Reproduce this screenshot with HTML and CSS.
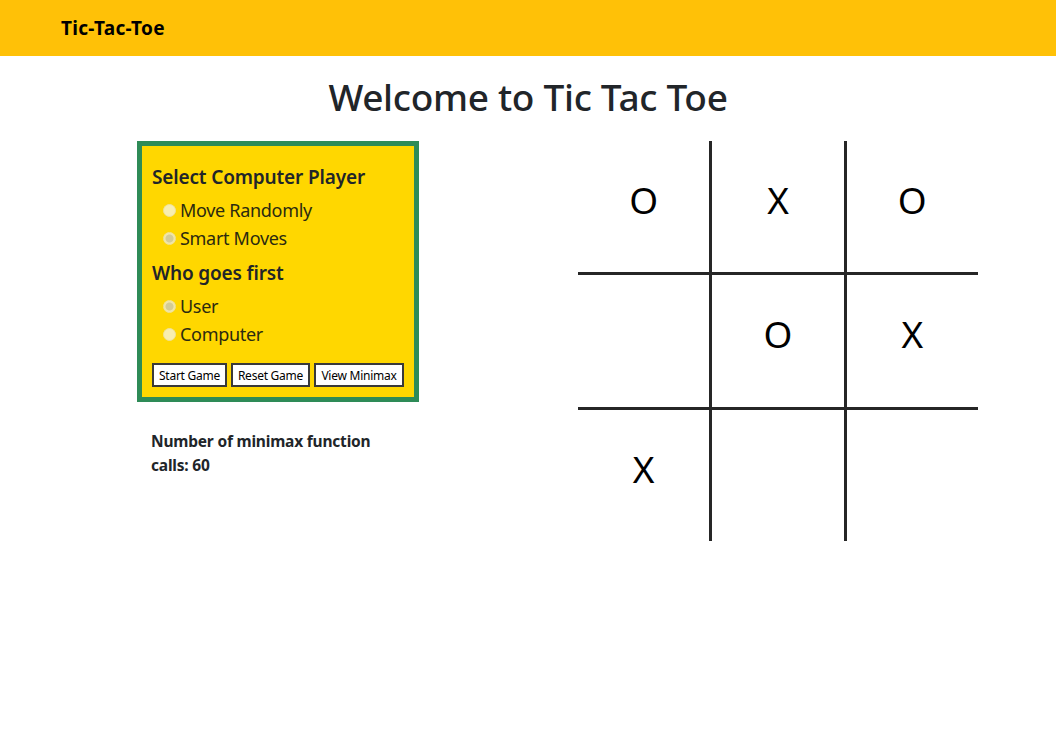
FILE: index.html
```html
<!DOCTYPE html>
<html>
<head>
<meta charset="utf-8">
<link rel="stylesheet" href="styles.css">
</head>
<body>
<nav class="navbar"><span class="brand">Tic-Tac-Toe</span></nav>
<h1 class="title">Welcome to Tic Tac Toe</h1>
<main class="main">
  <section class="left">
    <div class="panel">
      <h5 class="heading">Select Computer Player</h5>
      <div class="option"><span class="radio"></span>Move Randomly</div>
      <div class="option"><span class="radio checked"></span>Smart Moves</div>
      <h5 class="heading second">Who goes first</h5>
      <div class="option"><span class="radio checked"></span>User</div>
      <div class="option"><span class="radio"></span>Computer</div>
      <div class="buttons">
        <button class="btn btn-start">Start Game</button>
        <button class="btn btn-reset">Reset Game</button>
        <button class="btn btn-view">View Minimax</button>
      </div>
    </div>
    <p class="calls">Number of minimax function calls: 60</p>
  </section>
  <section class="board">
    <div class="cell">O</div>
    <div class="cell">X</div>
    <div class="cell">O</div>
    <div class="cell"></div>
    <div class="cell">O</div>
    <div class="cell">X</div>
    <div class="cell">X</div>
    <div class="cell"></div>
    <div class="cell"></div>
  </section>
</main>
</body>
</html>
```
FILE: styles.css
```css
* { box-sizing: border-box; }
html, body { margin: 0; padding: 0; background: #fff; }
body {
  font-family: "Noto Sans", "Open Sans", sans-serif;
  color: #212529;
}
.navbar {
  height: 56px;
  background: #ffc107;
  display: flex;
  align-items: center;
  padding-left: 61px;
}
.brand {
  font-size: 19px;
  font-weight: 700;
  color: #000;
  letter-spacing: 0.3px;
}
.title {
  margin: 17px 0 0;
  text-align: center;
  font-size: 37px;
  font-weight: 500;
  line-height: 48px;
  letter-spacing: -0.3px;
}
.main {
  display: flex;
  padding-left: 137px;
  margin-top: 20px;
}
.left { width: 282px; flex: none; }
.panel {
  border: 5px solid #2e8b57;
  background: #ffd700;
  padding: 19px 10px 10px 10px;
  height: 261px;
}
.heading {
  margin: 0;
  font-size: 19px;
  font-weight: 600;
  line-height: 24px;
  letter-spacing: -0.15px;
}
.heading.second { margin-top: 9px; }
.option {
  display: flex;
  align-items: center;
  font-size: 18px;
  line-height: 28px;
  padding-left: 11px;
  color: #2b2a10;
  letter-spacing: -0.3px;
}
.heading + .option { margin-top: 7px; }
.radio {
  width: 13px;
  height: 13px;
  border-radius: 50%;
  background: #f8eeb0;
  border: 1px solid #efe29a;
  margin-right: 4px;
}
.radio.checked {
  background: radial-gradient(circle, #d3cb96 0 3.5px, #f1e6a8 4.5px);
}
.buttons {
  display: flex;
  gap: 4px;
  margin-top: 15px;
}
.btn {
  flex: none;
  white-space: nowrap;
  font-family: "Noto Sans", sans-serif;
  font-size: 12px;
  height: 24px;
  padding: 0;
  background: #fff;
  color: #000;
  border: 2px solid #3a3a3a;
  letter-spacing: -0.25px;
}
.btn-start { width: 75px; }
.btn-reset { width: 79px; }
.btn-view { width: 90px; }
.calls {
  margin: 27px 0 0 14px;
  width: 240px;
  font-size: 15.5px;
  font-weight: 700;
  line-height: 24px;
  letter-spacing: -0.2px;
}
.board {
  margin-left: 159px;
  width: 400px;
  height: 400px;
  flex: none;
  display: grid;
  grid-template-columns: repeat(3, 1fr);
  grid-template-rows: repeat(3, 1fr);
  gap: 3px;
  background: #262626;
}
.cell {
  display: flex;
  align-items: center;
  justify-content: center;
  font-size: 37px;
  color: #000;
  background: #fff;
  padding-bottom: 14px;
}
```
